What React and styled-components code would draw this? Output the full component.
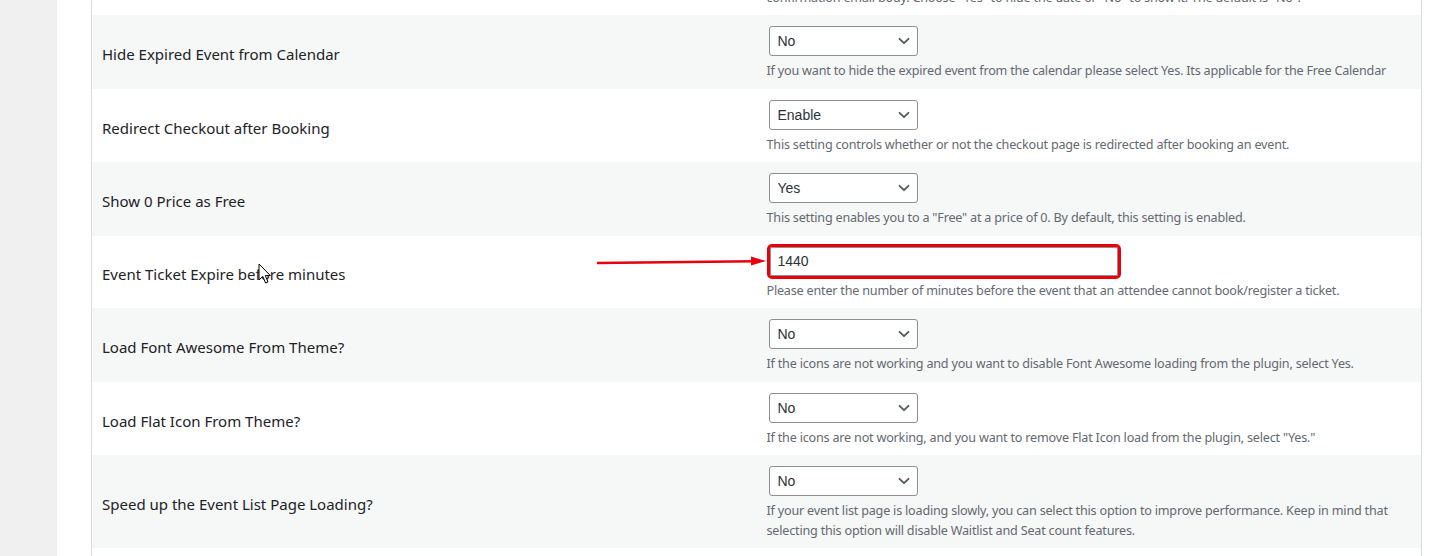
import React from "react";
import styled, { createGlobalStyle } from "styled-components";

const GlobalStyle = createGlobalStyle`
  html, body {
    margin: 0;
    padding: 0;
    background: #ffffff;
    overflow: hidden;
  }
  body {
    font-family: "Noto Sans", "Open Sans", sans-serif;
  }
`;

const settings = [
  {
    label: "Show Event Date in Email",
    kind: "select",
    value: "No",
    help: [
      'confirmation email body. Choose "Yes" to hide the date or "No" to show it. The default is "No".',
    ],
  },
  {
    label: "Hide Expired Event from Calendar",
    kind: "select",
    value: "No",
    help: [
      "If you want to hide the expired event from the calendar please select Yes. Its applicable for the Free Calendar",
    ],
  },
  {
    label: "Redirect Checkout after Booking",
    kind: "select",
    value: "Enable",
    help: [
      "This setting controls whether or not the checkout page is redirected after booking an event.",
    ],
  },
  {
    label: "Show 0 Price as Free",
    kind: "select",
    value: "Yes",
    help: [
      'This setting enables you to a "Free" at a price of 0. By default, this setting is enabled.',
    ],
  },
  {
    label: "Event Ticket Expire before minutes",
    kind: "input",
    value: "1440",
    highlight: true,
    help: [
      "Please enter the number of minutes before the event that an attendee cannot book/register a ticket.",
    ],
  },
  {
    label: "Load Font Awesome From Theme?",
    kind: "select",
    value: "No",
    help: [
      "If the icons are not working and you want to disable Font Awesome loading from the plugin, select Yes.",
    ],
  },
  {
    label: "Load Flat Icon From Theme?",
    kind: "select",
    value: "No",
    help: [
      'If the icons are not working, and you want to remove Flat Icon load from the plugin, select "Yes."',
    ],
  },
  {
    label: "Speed up the Event List Page Loading?",
    kind: "select",
    value: "No",
    help: [
      "If your event list page is loading slowly, you can select this option to improve performance. Keep in mind that selecting this option will disable Waitlist and Seat count features.",
    ],
  },
];

function Chevron() {
  return (
    <svg width="14" height="14" viewBox="0 0 14 14" fill="none">
      <path
        d="M2.5 4.8 L7 9.2 L11.5 4.8"
        stroke="#50575e"
        strokeWidth="1.8"
        strokeLinecap="round"
        strokeLinejoin="round"
      />
    </svg>
  );
}

function Cursor() {
  return (
    <svg width="14" height="22" viewBox="0 0 14 22">
      <path
        d="M1 1 L1 17 L4.8 13.4 L7.6 20 L10 19 L7.3 12.6 L12.4 12.6 Z"
        fill="#ffffff"
        stroke="#000000"
        strokeWidth="1"
        strokeLinejoin="round"
      />
    </svg>
  );
}

function SettingRow({ item, shaded }) {
  return (
    <Row $shaded={shaded}>
      <Label>
        {item.label}
        {item.highlight && (
          <CursorMark>
            <Cursor />
          </CursorMark>
        )}
      </Label>
      <Field>
        {item.kind === "select" ? (
          <SelectWrap>
            <Select defaultValue={item.value}>
              <option>{item.value}</option>
            </Select>
            <ChevronMark>
              <Chevron />
            </ChevronMark>
          </SelectWrap>
        ) : (
          <InputWrap>
            <TextInput
              type="text"
              defaultValue={item.value}
              $highlight={item.highlight}
            />
            {item.highlight && (
              <PointerArrow width="172" height="14" viewBox="0 0 172 14">
                <path d="M0 8 L158 6.2" stroke="#e8000b" strokeWidth="2.4" />
                <path d="M154 1.5 L169 6 L154 10.5 Z" fill="#e8000b" />
              </PointerArrow>
            )}
          </InputWrap>
        )}
        <Help>{item.help[0]}</Help>
      </Field>
    </Row>
  );
}

export default function App() {
  return (
    <>
      <GlobalStyle />
      <Page>
        <AdminMenu />
        <Content>
          <Table>
            {settings.map((item, i) => (
              <SettingRow key={item.label} item={item} shaded={i % 2 === 1} />
            ))}
          </Table>
        </Content>
      </Page>
    </>
  );
}

const Page = styled.div`
  display: flex;
  height: 556px;
  overflow: hidden;
  background: #ffffff;
`;

const AdminMenu = styled.div`
  width: 57px;
  flex: none;
  background: #f0f0f1;
`;

const Content = styled.div`
  flex: 1;
  padding-left: 34px;
  padding-right: 21px;
  overflow: hidden;
`;

const Table = styled.div`
  margin-top: -58.5px;
  border-left: 1px solid #dcdcde;
  border-right: 1px solid #dcdcde;
  min-height: 700px;
`;

const Row = styled.div`
  display: grid;
  grid-template-columns: 1fr 1fr;
  background: ${(p) => (p.$shaded ? "#f6f7f7" : "#ffffff")};
`;

const Label = styled.div`
  position: relative;
  display: flex;
  align-items: center;
  padding: 0 10px;
  padding-top: 5px;
  font-size: 15px;
  color: #1d2327;
`;

const CursorMark = styled.span`
  position: absolute;
  left: 166px;
  top: 27px;
  line-height: 0;
`;

const Field = styled.div`
  padding: 11px 10px 8px;
`;

const SelectWrap = styled.div`
  position: relative;
  width: 149px;
  margin-left: 2px;
`;

const Select = styled.select`
  appearance: none;
  -webkit-appearance: none;
  display: block;
  width: 149px;
  height: 30px;
  padding: 0 24px 0 8px;
  border: 1px solid #8c8f94;
  border-radius: 3px;
  background: #ffffff;
  font-family: "Liberation Sans", Arial, sans-serif;
  font-size: 14px;
  color: #2c3338;
  outline: none;
`;

const ChevronMark = styled.span`
  position: absolute;
  right: 7px;
  top: 8px;
  line-height: 0;
  pointer-events: none;
`;

const InputWrap = styled.div`
  position: relative;
  width: 348px;
  margin-left: 3px;
`;

const TextInput = styled.input`
  display: block;
  box-sizing: border-box;
  width: 348px;
  height: 29px;
  padding: 0 7px;
  border: 1px solid #8c8f94;
  border-radius: 2px;
  background: #ffffff;
  font-family: "Liberation Sans", Arial, sans-serif;
  font-size: 14px;
  color: #2c3338;
  outline: ${(p) => (p.$highlight ? "3px solid #e8000b" : "none")};
  outline-offset: 0;
`;

const PointerArrow = styled.svg`
  position: absolute;
  left: -173px;
  top: 8px;
`;

const Help = styled.p`
  margin: 5px 0 0;
  font-size: 12.6px;
  letter-spacing: -0.2px;
  line-height: 19.5px;
  color: #646970;
`;
